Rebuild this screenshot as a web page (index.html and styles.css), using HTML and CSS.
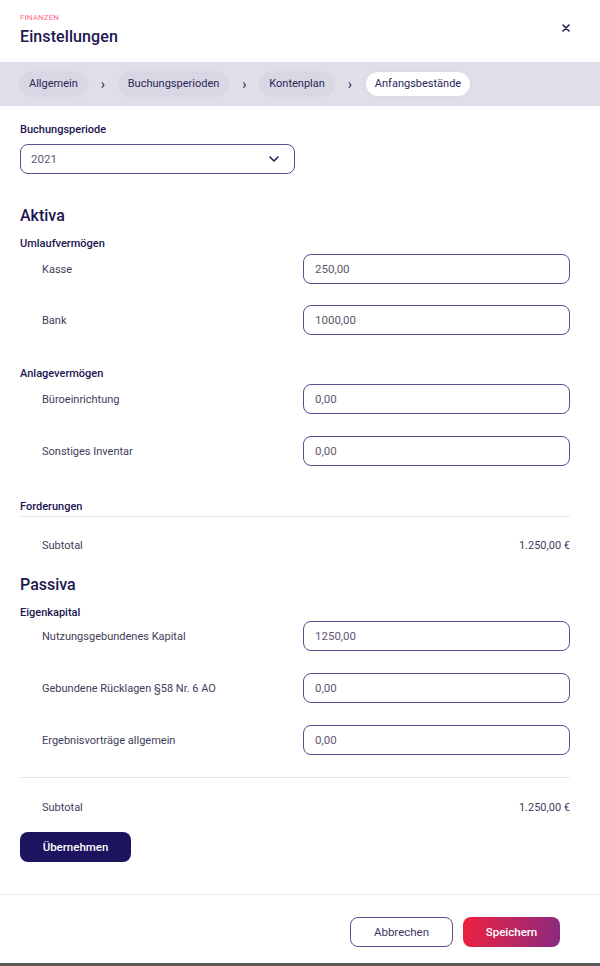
FILE: index.html
```html
<!DOCTYPE html>
<html lang="de">
<head>
<meta charset="utf-8">
<link rel="stylesheet" href="styles.css">
<title>Einstellungen</title>
</head>
<body>
<div class="page">
  <header class="head">
    <div class="head-text">
      <div class="eyebrow">FINANZEN</div>
      <h1 class="title">Einstellungen</h1>
    </div>
    <button class="close" aria-label="Schließen">
      <svg width="8" height="8" viewBox="0 0 8 8"><path d="M1 1L7 7M7 1L1 7" stroke="#1c1651" stroke-width="1.5" stroke-linecap="round"/></svg>
    </button>
  </header>

  <nav class="crumbs">
    <span class="pill">Allgemein</span>
    <span class="sep">›</span>
    <span class="pill">Buchungsperioden</span>
    <span class="sep">›</span>
    <span class="pill">Kontenplan</span>
    <span class="sep">›</span>
    <span class="pill active">Anfangsbestände</span>
  </nav>

  <main class="content">
    <div class="field-label">Buchungsperiode</div>
    <div class="select">
      <span>2021</span>
      <svg width="10" height="6" viewBox="0 0 10 6"><path d="M1 1L5 5L9 1" fill="none" stroke="#1c1651" stroke-width="1.5" stroke-linecap="round" stroke-linejoin="round"/></svg>
    </div>

    <h2 class="section-title first">Aktiva</h2>
    <div class="group-title">Umlaufvermögen</div>
    <div class="row first-row"><span class="row-label">Kasse</span><div class="input">250,00</div></div>
    <div class="row"><span class="row-label">Bank</span><div class="input">1000,00</div></div>

    <div class="group-title spaced">Anlagevermögen</div>
    <div class="row first-row"><span class="row-label">Büroeinrichtung</span><div class="input">0,00</div></div>
    <div class="row wide"><span class="row-label">Sonstiges Inventar</span><div class="input">0,00</div></div>

    <div class="group-title spaced ruled">Forderungen</div>
    <div class="subtotal"><span>Subtotal</span><span>1.250,00 €</span></div>

    <h2 class="section-title">Passiva</h2>
    <div class="group-title">Eigenkapital</div>
    <div class="row first-row close-row"><span class="row-label">Nutzungsgebundenes Kapital</span><div class="input">1250,00</div></div>
    <div class="row wide"><span class="row-label">Gebundene Rücklagen §58 Nr. 6 AO</span><div class="input">0,00</div></div>
    <div class="row wide"><span class="row-label">Ergebnisvorträge allgemein</span><div class="input">0,00</div></div>

    <hr class="divider">
    <div class="subtotal after-rule"><span>Subtotal</span><span>1.250,00 €</span></div>

    <button class="btn btn-primary">Übernehmen</button>
  </main>

  <footer class="foot">
    <button class="btn btn-outline">Abbrechen</button>
    <button class="btn btn-gradient">Speichern</button>
  </footer>
</div>
</body>
</html>
```

FILE: styles.css
```css
* { box-sizing: border-box; }
html, body { margin: 0; padding: 0; }
body {
  width: 600px;
  height: 966px;
  background: #ffffff;
  font-family: Roboto, "Liberation Sans", sans-serif;
  color: #1c1651;
  overflow: hidden;
}
.page {
  height: 966px;
  display: flex;
  flex-direction: column;
  border-bottom: 3px solid #5a5a5a;
}
.head {
  display: flex;
  justify-content: space-between;
  align-items: flex-start;
  padding: 13px 30px 0 20px;
  height: 62px;
}
.eyebrow {
  font-size: 8px;
  line-height: 10px;
  color: #ff6d8c;
  letter-spacing: 0.1px;
}
.title {
  margin: 4px 0 0 0;
  font-size: 16px;
  line-height: 20px;
  font-weight: 500;
  color: #1c1651;
  letter-spacing: 0.1px;
}
.close {
  border: 0;
  background: none;
  padding: 0;
  margin-top: 11px;
  width: 8px;
  height: 8px;
  display: flex;
}
.crumbs {
  height: 44px;
  background: #e0dfe9;
  display: flex;
  align-items: center;
  padding: 0 20px;
}
.pill {
  height: 24px;
  line-height: 24px;
  padding: 0 9px;
  border-radius: 12px;
  background: #d9d7e3;
  font-size: 11px;
  color: #2b2658;
  box-shadow: 0 0 2px rgba(60, 50, 110, 0.12);
}
.pill.active { background: #ffffff; }
.sep {
  width: 32px;
  text-align: center;
  font-size: 14px;
  color: #2b2658;
  line-height: 24px;
}
.content {
  padding: 17px 30px 0 20px;
  flex: 1;
}
.field-label {
  font-size: 11px;
  line-height: 14px;
  font-weight: 500;
  color: #1c1651;
}
.select {
  margin-top: 7px;
  width: 275px;
  height: 30px;
  border: 1.5px solid #574f8f;
  border-radius: 8px;
  display: flex;
  align-items: center;
  justify-content: space-between;
  padding: 0 15px 0 10px;
  font-size: 11.5px;
  color: #5c5a6e;
}
.section-title {
  margin: 22px 0 0 0;
  font-size: 16px;
  line-height: 20px;
  font-weight: 500;
  color: #1c1651;
}
.section-title.first { margin-top: 32px; }
.group-title {
  margin-top: 11px;
  font-size: 11px;
  line-height: 14px;
  font-weight: 500;
  color: #1c1651;
}
.group-title.spaced { margin-top: 32px; }
.group-title.ruled {
  margin-top: 34px;
  padding-bottom: 2px;
  border-bottom: 1px solid #e9e8ee;
}
.row {
  margin-top: 21px;
  display: flex;
  align-items: center;
  justify-content: space-between;
  height: 30px;
}
.row.wide { margin-top: 22px; }
.row.first-row { margin-top: 3px; }
.row.close-row { margin-top: 1px; }
.row-label {
  padding-left: 22px;
  font-size: 11px;
  color: #3f3d5a;
}
.input {
  width: 267px;
  height: 30px;
  border: 1.5px solid #574f8f;
  border-radius: 8px;
  display: flex;
  align-items: center;
  padding-left: 11px;
  font-size: 11.5px;
  color: #5c5a6e;
}
.subtotal {
  margin-top: 22px;
  display: flex;
  justify-content: space-between;
  padding-left: 22px;
  font-size: 11px;
  line-height: 14px;
  color: #3f3d5a;
}
.subtotal.after-rule { margin-top: 23px; }
.divider {
  margin: 22px 0 0 0;
  border: 0;
  border-top: 1px solid #e9e8ee;
  height: 0;
}
.btn {
  font-family: Roboto, "Liberation Sans", sans-serif;
  height: 30px;
  border-radius: 8px;
  font-size: 11.5px;
  font-weight: 500;
  cursor: pointer;
}
.btn-primary {
  margin-top: 17px;
  width: 111px;
  border: 0;
  background: #1c145e;
  color: #ffffff;
  display: block;
}
.foot {
  border-top: 1px solid #ebeaf0;
  height: 69px;
  display: flex;
  justify-content: flex-end;
  align-items: flex-start;
  gap: 10px;
  padding: 22px 40px 0 0;
}
.btn-outline {
  width: 103px;
  background: #ffffff;
  border: 1.5px solid #574f8f;
  color: #3b3760;
  font-weight: 400;
}
.btn-gradient {
  width: 97px;
  border: 0;
  background: linear-gradient(100deg, #ee2140 0%, #b82763 55%, #87297f 100%);
  color: #ffffff;
}
```
